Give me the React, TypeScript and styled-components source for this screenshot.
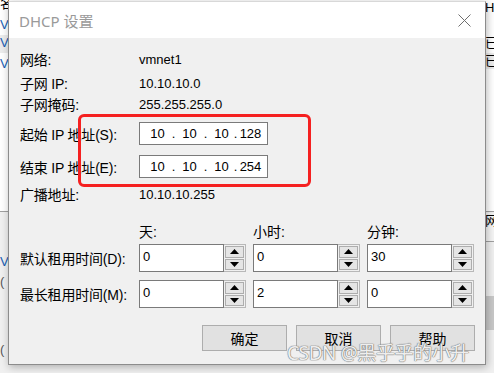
import React from "react";
import styled, { createGlobalStyle } from "styled-components";

const GlobalStyle = createGlobalStyle`
  html, body {
    margin: 0;
    padding: 0;
    width: 494px;
    height: 373px;
    overflow: hidden;
    font-family: "Liberation Sans", "Noto Sans CJK SC", sans-serif;
  }
  * { box-sizing: border-box; }
`;

const FONT = `"Liberation Sans", "Noto Sans CJK SC", sans-serif`;

const Desktop = styled.div`
  position: relative;
  width: 494px;
  height: 373px;
  display: flex;
  flex-direction: column;
  background: #ffffff;
`;

const UpperPane = styled.div`
  height: 212px;
  border-bottom: 1px solid #a0a0a0;
  display: flex;
  justify-content: space-between;
`;

const LowerPane = styled.div`
  flex: 1;
  background: #f0f0f0;
  display: flex;
  justify-content: space-between;
`;

const Strip = styled.div`
  width: 9px;
  display: flex;
  flex-direction: column;
  overflow: hidden;
  font-size: 13px;
  line-height: 16px;
`;

const Frag = styled.div<{ $mt?: number; $color?: string; $bg?: string; $h?: number }>`
  margin-top: ${(p) => p.$mt ?? 0}px;
  height: ${(p) => p.$h ?? 16}px;
  color: ${(p) => p.$color ?? "#000"};
  background: ${(p) => p.$bg ?? "transparent"};
  white-space: nowrap;
  font-family: ${FONT};
`;

const Dialog = styled.div`
  position: absolute;
  left: 8px;
  top: 1px;
  width: 478px;
  height: 364px;
  border: 1px solid #8c8c8c;
  border-top-color: #d8d8d8;
  background: #f0f0f0;
  box-shadow: 1px 2px 8px rgba(0, 0, 0, 0.28);
  display: flex;
  flex-direction: column;
`;

const TitleBar = styled.div`
  height: 36px;
  background: #ffffff;
  display: flex;
  align-items: center;
  justify-content: space-between;
  padding: 0 14px 0 10px;
`;

const Title = styled.div`
  font-family: "Noto Sans", "Noto Sans CJK SC", sans-serif;
  font-size: 15px;
  color: #9a9a9a;
  margin-top: 1px;
`;

const Body = styled.div`
  flex: 1;
  padding: 11px 10px 0 11px;
  display: flex;
  flex-direction: column;
`;

const Row = styled.div<{ $mt?: number; $h?: number }>`
  margin-top: ${(p) => p.$mt ?? 0}px;
  height: ${(p) => p.$h ?? 20}px;
  display: flex;
  align-items: center;
`;

const Label = styled.div`
  width: 119px;
  font-size: 14px;
  color: #000;
  white-space: nowrap;
  letter-spacing: -0.2px;
`;

const Value = styled.div`
  font-size: 13px;
  color: #000;
`;

const IpBox = styled.div`
  width: 129px;
  height: 23px;
  border: 1px solid #7a7a7a;
  background: #fff;
  display: flex;
  align-items: center;
  padding-left: 6px;
  font-size: 13px;
`;

const Octet = styled.span<{ $w?: number }>`
  width: ${(p) => p.$w ?? 23}px;
  text-align: center;
`;

const Dot = styled.span<{ $w?: number }>`
  width: ${(p) => p.$w ?? 9}px;
  text-align: center;
`;

const Columns = styled.div`
  display: flex;
  gap: 7px;
`;

const ColHead = styled.div`
  width: 107px;
  font-size: 14px;
  color: #000;
`;

const Spin = styled.div`
  width: 107px;
  height: 28px;
  display: flex;
`;

const SpinText = styled.div`
  flex: 1;
  border: 1px solid #7a7a7a;
  background: #fff;
  font-size: 13px;
  padding: 4px 0 0 3px;
  line-height: 16px;
`;

const Spinner = styled.div`
  width: 22px;
  border: 1px solid #b8b8b8;
  border-left: none;
  background: #f0f0f0;
  padding: 1px;
  display: flex;
  flex-direction: column;
  gap: 1px;
`;

const SpinBtn = styled.div`
  flex: 1;
  border: 1px solid #adadad;
  background: #e5e5e5;
  display: flex;
  align-items: center;
  justify-content: center;
`;

const ButtonBar = styled.div`
  margin-top: 17px;
  display: flex;
  justify-content: flex-end;
  gap: 9px;
`;

const Button = styled.div`
  width: 85px;
  height: 26px;
  border: 1px solid #adadad;
  background: #e1e1e1;
  display: flex;
  align-items: center;
  justify-content: center;
  font-size: 14px;
  color: #000;
`;

const Highlight = styled.div`
  position: absolute;
  left: 78px;
  top: 114px;
  width: 233px;
  height: 73px;
  border: 3px solid #f52020;
  border-radius: 6px;
`;

const Watermark = styled.div`
  position: absolute;
  left: 287px;
  top: 341px;
  font-family: "Noto Sans", "Noto Sans CJK SC", sans-serif;
  font-size: 19px;
  line-height: 24px;
  color: rgba(255, 255, 255, 0.9);
  text-shadow: 0 0 1px #7a7a7a, 0 0 1px #7a7a7a, 0 0 1px #7a7a7a;
  letter-spacing: -0.4px;
  white-space: nowrap;
`;

const Arrow = ({ up }: { up?: boolean }) => (
  <svg width="9" height="5" viewBox="0 0 9 5">
    <path d={up ? "M0 5 L4.5 0 L9 5 Z" : "M0 0 L4.5 5 L9 0 Z"} fill="#000" />
  </svg>
);

const Close = () => (
  <svg width="13" height="13" viewBox="0 0 13 13">
    <path d="M0.5 0.5 L12.5 12.5 M12.5 0.5 L0.5 12.5" stroke="#6e6e6e" strokeWidth="1" />
  </svg>
);

const IpField = ({ parts }: { parts: string[] }) => (
  <IpBox>
    {parts.map((p, i) => (
      <React.Fragment key={i}>
        {i > 0 && <Dot $w={i === 3 ? 5 : 9}>.</Dot>}
        <Octet $w={i === 3 ? 25 : 23}>{p}</Octet>
      </React.Fragment>
    ))}
  </IpBox>
);

const SpinBox = ({ value }: { value: string }) => (
  <Spin>
    <SpinText>{value}</SpinText>
    <Spinner>
      <SpinBtn>
        <Arrow up />
      </SpinBtn>
      <SpinBtn>
        <Arrow />
      </SpinBtn>
    </Spinner>
  </Spin>
);

const info = [
  { label: "网络:", value: "vmnet1", mt: 0 },
  { label: "子网 IP:", value: "10.10.10.0", mt: 4 },
  { label: "子网掩码:", value: "255.255.255.0", mt: 1 },
];

export default function App() {
  return (
    <>
      <GlobalStyle />
      <Desktop>
        <UpperPane>
          <Strip>
            <Frag $mt={-4}>名</Frag>
            <Frag $mt={5} $color="#1a5fb4">V</Frag>
            <Frag $mt={2} $color="#1a5fb4" $bg="#ececec" $h={18}>V</Frag>
            <Frag $mt={3} $color="#1a5fb4">V</Frag>
          </Strip>
          <Strip>
            <Frag $mt={0}>HC</Frag>
            <Frag $mt={19}>已/</Frag>
            <Frag $mt={2} $bg="#ececec">已/</Frag>
          </Strip>
        </UpperPane>
        <LowerPane>
          <Strip>
            <Frag $mt={42} $color="#1a5fb4">V</Frag>
            <Frag $mt={4} $color="#555">(</Frag>
            <Frag $mt={52} $color="#555">(</Frag>
          </Strip>
          <Strip>
            <Frag $mt={1} $h={28} $bg="#f5f5f5">网</Frag>
            <Frag $mt={0} $h={1} $bg="#a0a0a0" />
            <Frag $mt={54} $h={34} $bg="#c8c8c8" />
          </Strip>
        </LowerPane>

        <Dialog>
          <TitleBar>
            <Title>DHCP 设置</Title>
            <Close />
          </TitleBar>
          <Body>
            {info.map((r) => (
              <Row key={r.label} $mt={r.mt}>
                <Label>{r.label}</Label>
                <Value>{r.value}</Value>
              </Row>
            ))}
            <Row $mt={8} $h={23}>
              <Label>起始 IP 地址(S):</Label>
              <IpField parts={["10", "10", "10", "128"]} />
            </Row>
            <Row $mt={10} $h={23}>
              <Label>结束 IP 地址(E):</Label>
              <IpField parts={["10", "10", "10", "254"]} />
            </Row>
            <Row $mt={6}>
              <Label>广播地址:</Label>
              <Value>10.10.10.255</Value>
            </Row>

            <Row $mt={17}>
              <Label />
              <Columns>
                <ColHead>天:</ColHead>
                <ColHead>小时:</ColHead>
                <ColHead>分钟:</ColHead>
              </Columns>
            </Row>
            <Row $mt={3} $h={28}>
              <Label>默认租用时间(D):</Label>
              <Columns>
                <SpinBox value="0" />
                <SpinBox value="0" />
                <SpinBox value="30" />
              </Columns>
            </Row>
            <Row $mt={8} $h={28}>
              <Label>最长租用时间(M):</Label>
              <Columns>
                <SpinBox value="0" />
                <SpinBox value="2" />
                <SpinBox value="0" />
              </Columns>
            </Row>

            <ButtonBar>
              <Button>确定</Button>
              <Button>取消</Button>
              <Button>帮助</Button>
            </ButtonBar>
          </Body>
        </Dialog>

        <Highlight />
        <Watermark>CSDN @黑乎乎的小升</Watermark>
      </Desktop>
    </>
  );
}
